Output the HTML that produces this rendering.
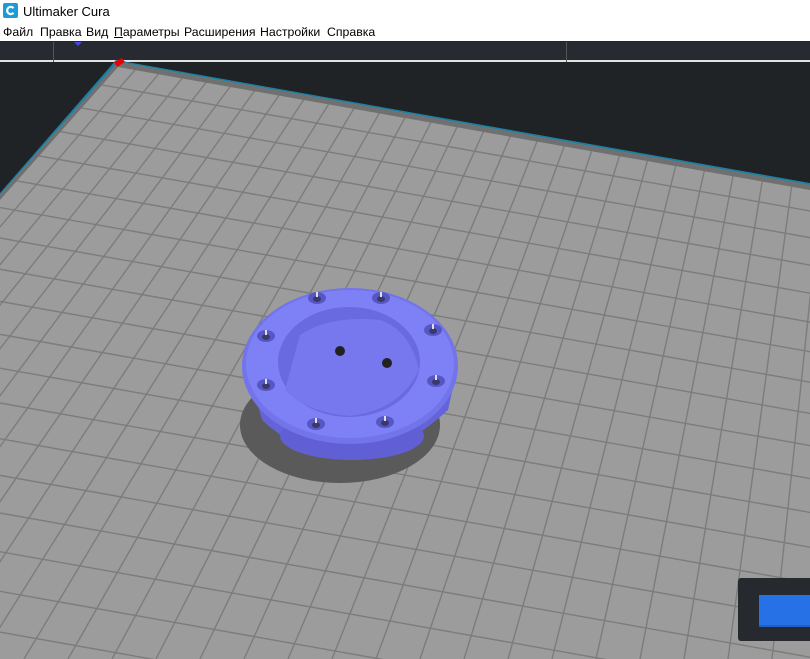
<!DOCTYPE html>
<html><head><meta charset="utf-8"><style>
html,body{margin:0;padding:0;width:810px;height:659px;overflow:hidden;background:#fff;font-family:"Liberation Sans","Noto Sans CJK SC",sans-serif}
#title{position:absolute;left:0;top:0;width:810px;height:22px;background:#fff}
#title .t{position:absolute;left:23px;top:4px;font-size:13px;color:#000}
#menu{position:absolute;left:0;top:22px;width:810px;height:19px;font-size:12.3px;color:#000}
#menu span{position:absolute;top:3px;white-space:nowrap}
#v{position:absolute;left:0;top:41px;display:block}
</style></head><body>
<div id="title">
<svg style="position:absolute;left:3px;top:3px" width="15" height="15"><rect width="15" height="15" rx="2" fill="#1b9bd8"/><path d="M10.5 5.2 A3.6 3.6 0 1 0 10.5 9.8" stroke="#fff" stroke-width="2.2" fill="none"/></svg>
<span class="t">Ultimaker Cura</span></div>
<div id="menu"><span style="left:3px">Файл</span><span style="left:40px">Правка</span><span style="left:86px">Вид</span><span style="left:114px"><u>П</u>араметры</span><span style="left:184px">Расширения</span><span style="left:260px">Настройки</span><span style="left:327px">Справка</span></div>
<svg id="v" width="810" height="618"></svg>
<script>
var s='<rect x="0" y="0" width="810" height="618" fill="#1f2326"/>';
s+='<rect x="0" y="0" width="810" height="1" fill="#1b1f5a"/><rect x="0" y="1" width="810" height="18" fill="#272b31"/><rect x="0" y="19" width="810" height="2" fill="#e2e2e2"/><rect x="53" y="1" width="1" height="20" fill="#555"/><rect x="566" y="1" width="1" height="20" fill="#555"/><path d="M74 1 L82 1 L78 5Z" fill="#4545e8"/>';
var o=-41;
function Y(y){return y+o;}
s+='<clipPath id="c"><path d="M118 '+Y(62)+' L810 '+Y(185)+' L810 '+Y(659)+' L0 '+Y(659)+' L0 '+Y(195)+'Z"/></clipPath>';
s+='<path d="M116 '+Y(60)+' L810 '+Y(183)+' L810 '+Y(188)+' L0 '+Y(200)+' L0 '+Y(193)+'Z" fill="#1e7fa0"/>';
s+='<g clip-path="url(#c)"><rect x="0" y="0" width="810" height="618" fill="#9c9c9c"/>';
var vx=932,vy=-856;
for(var x=-900;x<1500;x+=44){s+='<line x1="'+vx+'" y1="'+Y(vy)+'" x2="'+x+'" y2="'+Y(659)+'" stroke="#7c7c7c" stroke-width="1.4"/>';}
var y=112;while(y<800){s+='<line x1="-100" y1="'+Y(y-500*0.178)+'" x2="900" y2="'+Y(y+500*0.178)+'" stroke="#7c7c7c" stroke-width="1.4"/>';y+=22*(y+856)/918*1.12;}
s+='<path d="M118 '+Y(62)+' L810 '+Y(185)+' L810 '+Y(190)+' L118 '+Y(67)+' L0 '+Y(200)+' L0 '+Y(195)+'Z" fill="#707070"/>';
s+='</g>';
s+='<path d="M114 '+Y(62)+' L122 '+Y(58)+' L125 '+Y(62)+' L117 '+Y(67)+'Z" fill="#e00"/>';
s+='<ellipse cx="340" cy="'+Y(425)+'" rx="100" ry="58" fill="#5a5a5a"/>';
s+='<path d="M248 '+Y(370)+' L262 '+Y(420)+' Q350 '+Y(500)+' 448 '+Y(410)+' L458 '+Y(365)+'Z" fill="#6464d8"/>';
s+='<ellipse cx="352" cy="'+Y(436)+'" rx="72" ry="24" fill="#6060d4"/>';
s+='<ellipse cx="350" cy="'+Y(366)+'" rx="108" ry="78" fill="#7374ea"/>';
s+='<ellipse cx="350" cy="'+Y(364)+'" rx="104" ry="74" fill="#7e80f6"/>';
s+='<ellipse cx="349" cy="'+Y(362)+'" rx="71" ry="55" fill="#6a6ae0"/>';
s+='<path d="M285 '+Y(390)+' L300 '+Y(335)+' Q330 '+Y(315)+' 380 '+Y(320)+' Q410 '+Y(330)+' 419 '+Y(370)+' Q400 '+Y(410)+' 350 '+Y(416)+' Q305 '+Y(412)+' 285 '+Y(390)+'Z" fill="#7778ee"/>';
s+='<circle cx="340" cy="'+Y(351)+'" r="5" fill="#222"/><circle cx="387" cy="'+Y(363)+'" r="5" fill="#222"/>';
[[317,298],[381,298],[433,330],[436,381],[385,422],[316,424],[266,385],[266,336]].forEach(function(p){s+='<ellipse cx="'+p[0]+'" cy="'+Y(p[1])+'" rx="9" ry="6" fill="#5757c4"/><ellipse cx="'+p[0]+'" cy="'+Y(p[1]+1)+'" rx="4" ry="3" fill="#3a3a6a"/><rect x="'+(p[0]-1)+'" y="'+Y(p[1]-6)+'" width="2" height="5" fill="#dde"/>';});
s+='<rect x="738" y="'+Y(578)+'" width="80" height="63" rx="3" fill="#262a2e"/><rect x="759" y="'+Y(595)+'" width="60" height="32" fill="#2671e6"/><rect x="759" y="'+Y(625)+'" width="60" height="2" fill="#1f5fc6"/>';
document.getElementById('v').innerHTML=s;
</script>
</body></html>
